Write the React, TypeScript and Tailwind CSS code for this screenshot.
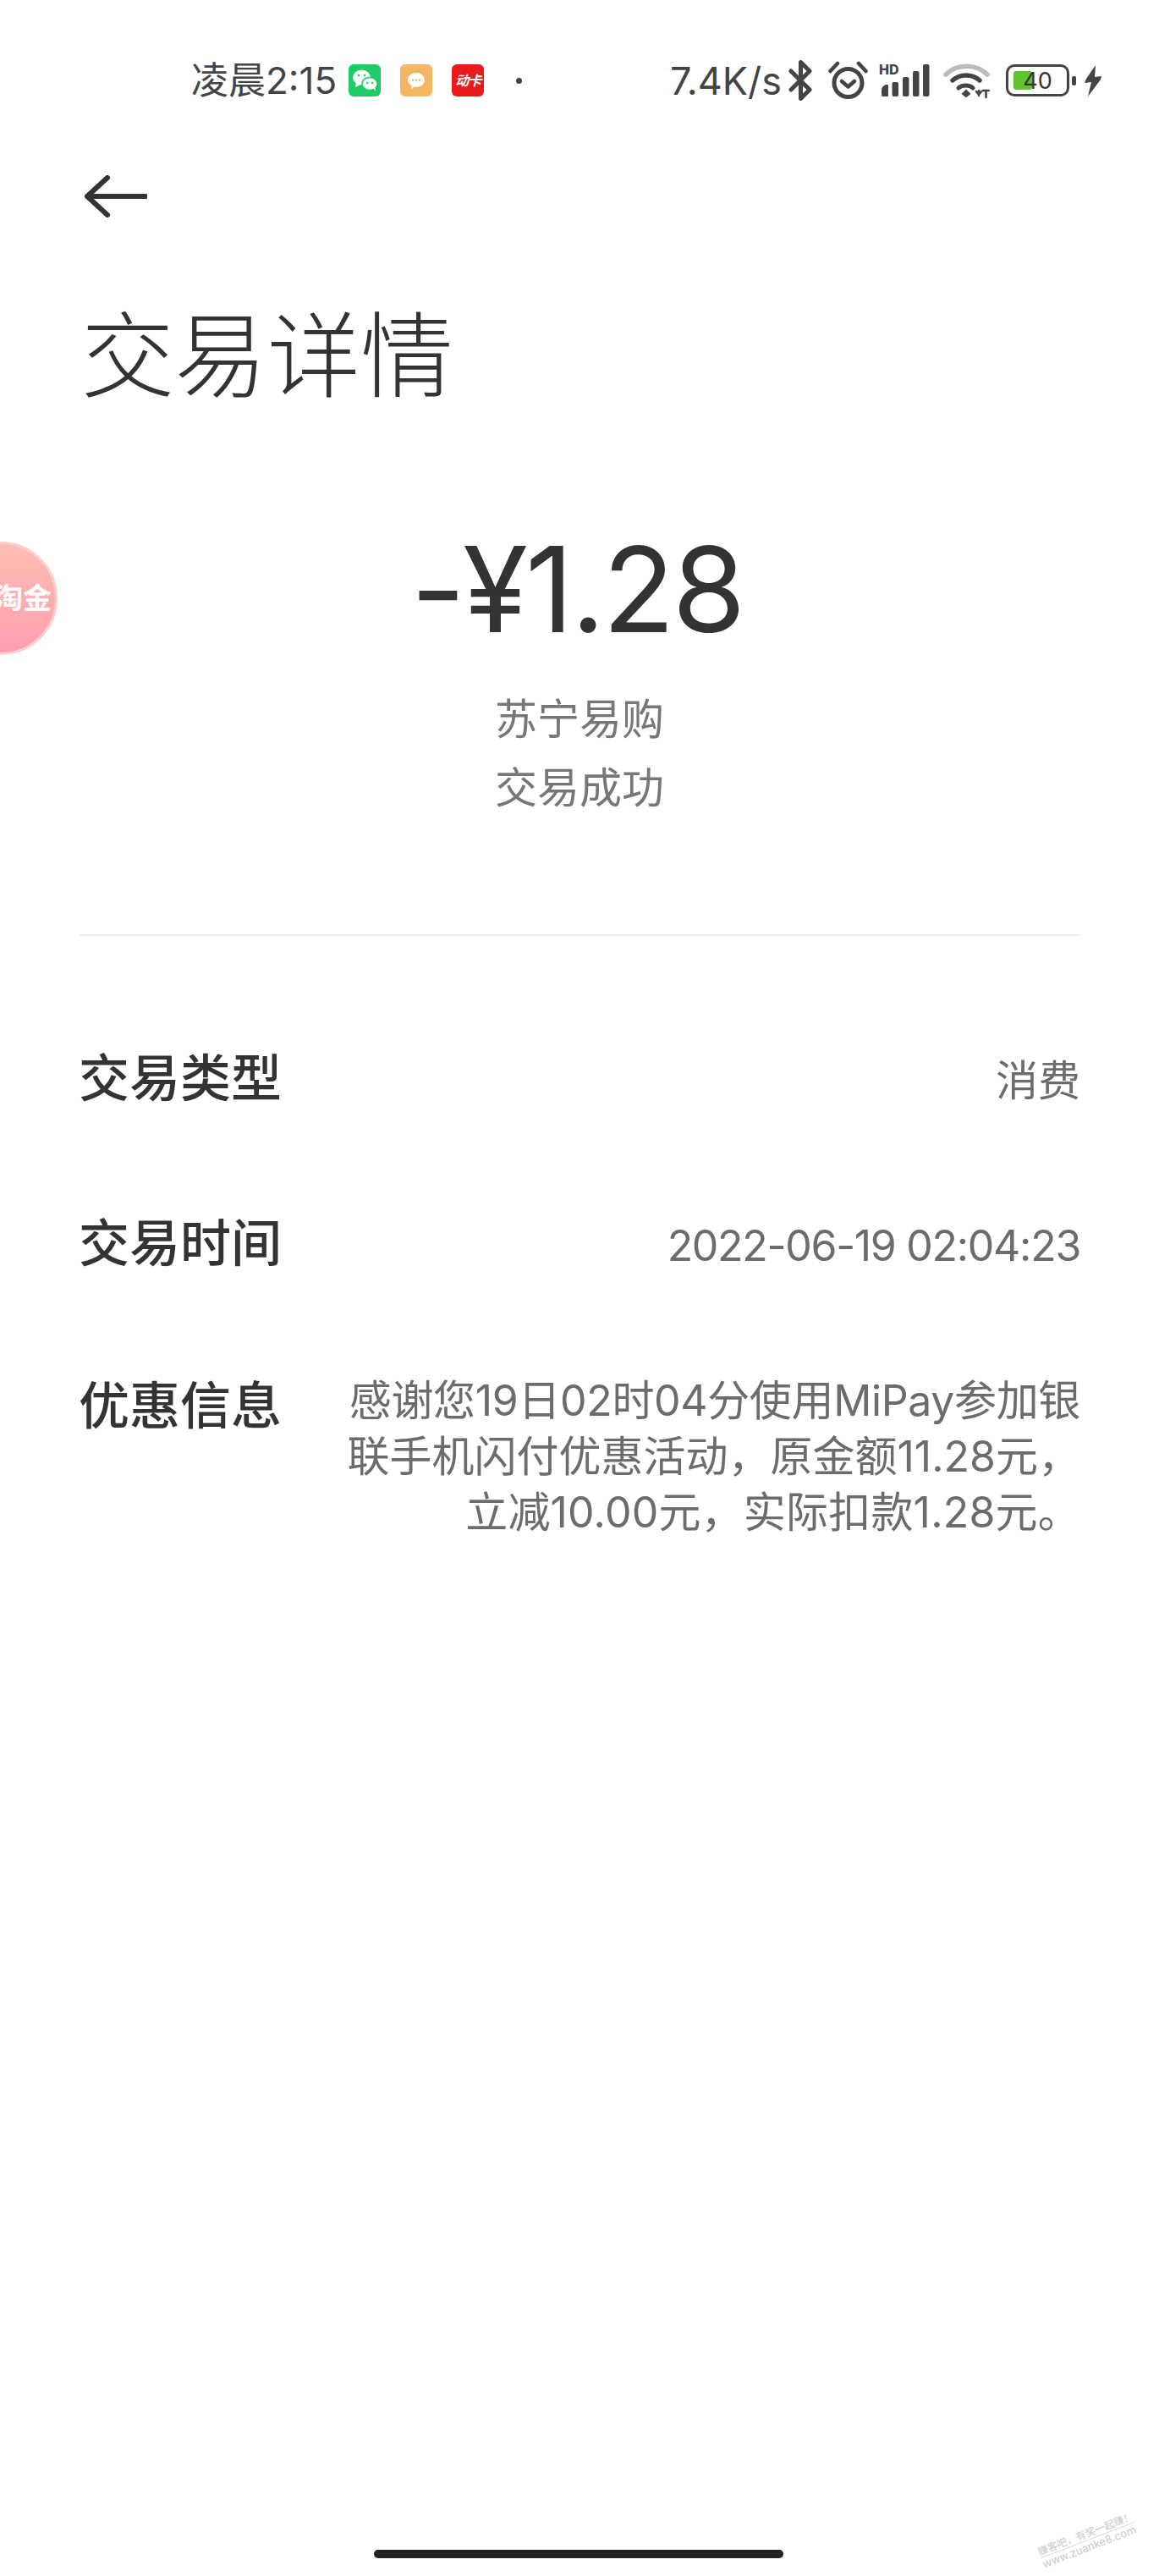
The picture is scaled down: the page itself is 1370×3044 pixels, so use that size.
const cjk = "font-['Inter','Noto_Sans_CJK_SC',sans-serif]";

function Wechat() {
  return (
    <div className="flex h-[38px] w-[38px] items-center justify-center rounded-[6px] bg-[#1ecb66]">
      <svg width="34" height="32" viewBox="0 0 34 32">
        <ellipse cx="13.5" cy="12.5" rx="10.5" ry="9" fill="#fff" />
        <path d="M7 18l-1 6 6-3z" fill="#fff" />
        <ellipse cx="23" cy="20" rx="9" ry="7.6" fill="#fff" stroke="#1ecb66" strokeWidth="1.5" />
        <path d="M27 25l3 4-1-6z" fill="#fff" />
        <circle cx="10" cy="10" r="1.3" fill="#1ecb66" />
        <circle cx="17" cy="10" r="1.3" fill="#1ecb66" />
        <circle cx="20" cy="19" r="1.2" fill="#1ecb66" />
        <circle cx="26" cy="19" r="1.2" fill="#1ecb66" />
      </svg>
    </div>
  );
}

function Msg() {
  return (
    <div className="flex h-[38px] w-[38px] items-center justify-center rounded-[6px] bg-[#f3b662]">
      <svg width="24" height="24" viewBox="0 0 24 24">
        <path d="M12 3c5.5 0 10 3.6 10 8.4s-4.5 8.4-10 8.4c-.8 0-1.5-.1-2.2-.2L6 22.500l.2-4.400C3.600 16.600 2 14.200 2 11.400 2 6.600 6.500 3 12 3z" fill="#fff" />
        <circle cx="8" cy="11.500" r="1.200" fill="#f3b662" />
        <circle cx="12" cy="11.500" r="1.200" fill="#f3b662" />
        <circle cx="16" cy="11.500" r="1.200" fill="#f3b662" />
      </svg>
    </div>
  );
}

function Card() {
  return (
    <div className={`flex h-[38px] w-[38px] items-center justify-center rounded-[6px] bg-[#e81a1a] text-[16px] font-bold italic leading-[20px] tracking-[-1px] text-white ${cjk}`}>
      动卡
    </div>
  );
}

function Bluetooth() {
  return (
    <svg width="29" height="48" viewBox="0 0 29 48" fill="none" stroke="#444" strokeWidth="5" strokeLinejoin="round" strokeLinecap="round">
      <path d="M3 13l22 22-10.500 10.500V2.500L25 13 3 35" />
    </svg>
  );
}

function Alarm() {
  return (
    <svg width="47" height="46" viewBox="0 0 47 46" fill="none" stroke="#444" strokeLinecap="round">
      <circle cx="23.500" cy="26" r="16.500" strokeWidth="5" />
      <path d="M16 24l7.500 6.500L31 24" strokeWidth="4.500" strokeLinejoin="round" />
      <path d="M2.500 12L11 3M44.500 12L36 3" strokeWidth="4.500" />
    </svg>
  );
}

function Signal() {
  return (
    <svg width="60" height="38" viewBox="0 0 60 38">
      <text x="0" y="12" fontSize="16" fontWeight="800" fontFamily="Inter, sans-serif" fill="#444">HD</text>
      <path d="M3 31q0-5 5-7h2q1 0 1 1v12q0 1-1 1H5q-2 0-2-2z" fill="#444" />
      <rect x="15.500" y="21" width="7.500" height="17" rx="2" fill="#444" />
      <rect x="28" y="15" width="7.500" height="23" rx="2" fill="#444" />
      <rect x="40" y="8" width="7.500" height="30" rx="2" fill="#444" />
      <rect x="52" y="0" width="7.500" height="38" rx="2" fill="#444" />
    </svg>
  );
}

function Wifi() {
  return (
    <svg width="55" height="43" viewBox="0 0 55 43" fill="none" strokeLinecap="round">
      <path d="M3 14C16 1 39 1 52 14" stroke="#bbb" strokeWidth="5.500" />
      <path d="M11 21C20 13 34 13 43 21" stroke="#444" strokeWidth="5.500" />
      <path d="M18 30C22 26 31 26 35 30" stroke="#444" strokeWidth="5" />
      <path d="M23 37l4-4 4 4-4 3z" fill="#444" stroke="#444" strokeWidth="2" />
      <path d="M39 34l3 4 3-4M42 33v6M47 33h7M50.500 33v8" stroke="#444" strokeWidth="2.500" />
    </svg>
  );
}

function Battery() {
  return (
    <div className="flex items-center gap-[3px]">
      <div className={`relative flex h-[38px] w-[75px] items-center justify-center rounded-[10px] border-[3px] border-[#444] text-[27px] leading-none text-[#333] ${cjk}`}>
        <div className="absolute bottom-[5px] left-[6px] top-[5px] w-[22px] rounded-[3px] bg-[#5fc42e]" />
        <span className="relative">40</span>
      </div>
      <div className="h-[11px] w-[5px] rounded-[2px] bg-[#444]" />
    </div>
  );
}

function Bolt() {
  return (
    <svg width="21" height="39" viewBox="0 0 21 39">
      <path d="M14 1L3 17 1 22l8-1-4 17 15-20 1-4-8 1z" fill="#444" />
    </svg>
  );
}

function StatusBar() {
  return (
    <div className={`flex h-[60px] items-center pl-[226px] pr-[68px] text-[#444] ${cjk}`}>
      <span className="text-[44px] leading-none">凌晨2:15</span>
      <div className="ml-[14px] flex items-center gap-[23px]">
        <Wechat />
        <Msg />
        <Card />
      </div>
      <div className="ml-[38px] h-[7px] w-[7px] rounded-full bg-[#444]" />
      <div className="ml-auto flex items-center">
        <span className="text-[45px] leading-none">7.4K/s</span>
        <div className="ml-[8px] flex items-center gap-[18px]">
          <Bluetooth />
          <Alarm />
        </div>
        <div className="ml-[13px]"><Signal /></div>
        <div className="ml-[16px]"><Wifi /></div>
        <div className="ml-[19px]"><Battery /></div>
        <div className="ml-[9px]"><Bolt /></div>
      </div>
    </div>
  );
}

function Row({ label, children, className, valueClass }: { label: string; children: React.ReactNode; className: string; valueClass: string }) {
  return (
    <div className={`flex items-start justify-between ${className}`}>
      <span className="whitespace-nowrap text-[60px] font-medium leading-[66px] text-[#333]">{label}</span>
      <div className={`text-right text-[50px] leading-[66px] text-[#6c6c6c] ${valueClass}`}>{children}</div>
    </div>
  );
}

export default function App() {
  return (
    <div className={`relative h-[3044px] w-[1370px] overflow-hidden bg-white ${cjk}`}>
      <div className="pt-[65px]"><StatusBar /></div>

      <div className="pl-[100px] pt-[82px]">
        <svg width="74" height="50" viewBox="0 0 74 50" fill="none" stroke="#333" strokeWidth="6" strokeLinecap="round" strokeLinejoin="round" className="block">
          <path d="M27 3L3 25l24 22M3 25h69" />
        </svg>
      </div>

      <h1 className="pl-[96px] pt-[99px] text-[110px] font-light leading-[130px] text-[#333]">交易详情</h1>

      <div className="flex flex-col items-center pt-[122px]">
        <div className="mr-[6px] text-[140px] leading-[176px] tracking-[-3px] text-[#333]">-¥1.28</div>
        <div className="mt-[26px] text-[50px] leading-[81px] text-[#777]">苏宁易购</div>
        <div className="text-[50px] leading-[81px] text-[#777]">交易成功</div>
      </div>

      <div className="mx-[93px] mt-[132px] h-[2px] bg-[#eeeeee]" />

      <div className="mx-[93px]">
        <Row label="交易类型" className="mt-[135px]" valueClass="mt-[3px]">消费</Row>
        <Row label="交易时间" className="mt-[126px]" valueClass="mt-[3px] tracking-[-1.3px]">2022-06-19 02:04:23</Row>
        <Row label="优惠信息" className="mt-[123px]" valueClass="-mt-[6px]">
          <div className="w-[880px]">
            <span className="tracking-[-0.35px]">感谢您19日02时04分使用MiPay参加银</span><br />
            联手机闪付优惠活动，原金额11.28元，<br />
            <span className="tracking-[0.2px]">立减10.00元，实际扣款1.28元。</span>
          </div>
        </Row>
      </div>

      <div className="absolute left-[-90px] top-[640px] flex h-[134px] w-[158px] items-center justify-end overflow-hidden rounded-full border-[3px] border-[#fdcfc8] bg-gradient-to-b from-[#ffbdb3] to-[#ff9fb0] pr-[4px] text-[34px] font-bold leading-none text-white">
        淘金
      </div>

      <div className="absolute bottom-[21px] left-[442px] h-[10px] w-[484px] rounded-full bg-[#222]" />

      <div className="absolute left-[1226px] top-[2986px] w-[120px] -rotate-[21deg] text-[13px] leading-[15px] text-[#c9c9c9]">
        <div className="whitespace-nowrap border-b border-[#ddd] text-[12px]">赚客吧，有奖一起赚！</div>
        <div className="whitespace-nowrap">www.zuanke8.com</div>
      </div>
    </div>
  );
}
